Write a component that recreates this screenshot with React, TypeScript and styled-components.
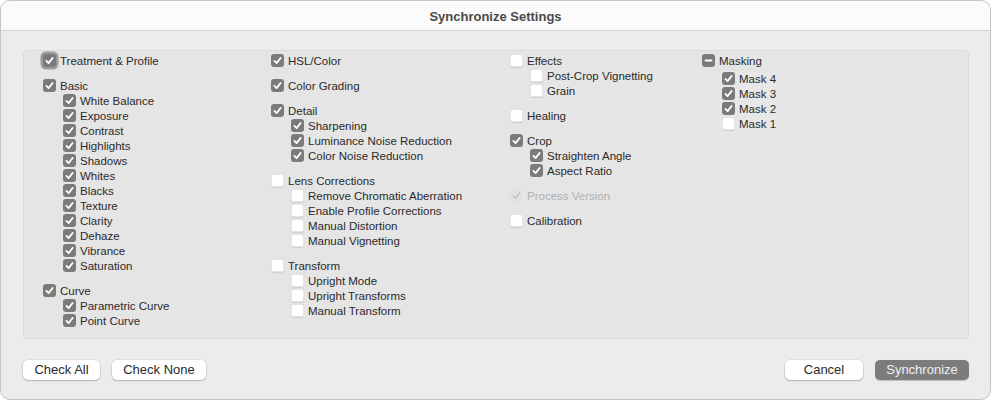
import React from "react";
import styled, { createGlobalStyle, css } from "styled-components";

const Global = createGlobalStyle`
  html, body { margin: 0; padding: 0; background: #ffffff; }
  body { font-family: "Liberation Sans", Arial, sans-serif; -webkit-font-smoothing: antialiased; }
  * { box-sizing: border-box; }
`;

const Window = styled.div`
  width: 991px;
  height: 400px;
  border: 1px solid #c4c4c4;
  border-radius: 10px;
  overflow: hidden;
  background: #ececec;
  display: flex;
  flex-direction: column;
`;

const TitleBar = styled.div`
  height: 30px;
  flex: none;
  background: #fbfbfb;
  border-bottom: 1px solid #d4d4d4;
  display: flex;
  align-items: center;
  justify-content: center;
  font-weight: bold;
  font-size: 13px;
  color: #4a4a4a;
  padding-top: 1px;
`;

const Body = styled.div`
  padding: 19px 21px 0 22px;
  display: flex;
  flex-direction: column;
`;

const Panel = styled.div`
  height: 289px;
  background: #e5e5e5;
  border: 1px solid #dadada;
  border-radius: 4px;
  display: grid;
  grid-template-columns: 228px 239px 192px 1fr;
  padding: 2px 0 0 19px;
`;

const Column = styled.div`
  display: flex;
  flex-direction: column;
  gap: 10px;
`;

const Group = styled.div`
  display: flex;
  flex-direction: column;
`;

const SubList = styled.div`
  display: flex;
  flex-direction: column;
  padding-left: 20px;
`;

const MaskBox = styled.div`
  margin-top: 2px;
  margin-left: 1px;
  width: 242px;
  height: 258px;
  background: #e7e7e7;
  border: 1px solid #e3e3e3;
  display: flex;
  flex-direction: column;
  padding: 0 0 0 18px;
`;

const Row = styled.div<{ $disabled?: boolean }>`
  height: 15px;
  display: flex;
  align-items: center;
  gap: 4px;
  font-size: 11.5px;
  color: ${(p) => (p.$disabled ? "#b0b0b0" : "#2a2a2a")};
  white-space: nowrap;
`;

type BoxState = "on" | "off" | "mixed" | "disabled";

const Box = styled.span<{ $state: BoxState; $focus?: boolean }>`
  width: 13px;
  height: 13px;
  flex: none;
  border-radius: 3px;
  display: flex;
  align-items: center;
  justify-content: center;
  ${(p) =>
    p.$state === "on" || p.$state === "mixed"
      ? css`
          background: #7b7b7b;
        `
      : p.$state === "disabled"
      ? css`
          background: #e2e2e2;
        `
      : css`
          background: #ffffff;
          box-shadow: inset 0 0 0 0.5px #d0d0d0, 0 0.5px 1px rgba(0, 0, 0, 0.1);
        `}
  ${(p) =>
    p.$focus &&
    css`
      box-shadow: 0 0 0 2.5px #9b9b9b;
    `}
`;

const Label = styled.span``;

function Check({
  label,
  state = "on",
  focus,
}: {
  label: string;
  state?: BoxState;
  focus?: boolean;
}) {
  return (
    <Row $disabled={state === "disabled"}>
      <Box $state={state} $focus={focus}>
        {(state === "on" || state === "disabled") && (
          <svg width="13" height="13" viewBox="0 0 13 13">
            <path
              d="M3.4 6.9 L5.6 9.1 L9.7 3.9"
              fill="none"
              stroke={state === "disabled" ? "#c4c4c4" : "#ffffff"}
              strokeWidth="1.7"
              strokeLinecap="round"
              strokeLinejoin="round"
            />
          </svg>
        )}
        {state === "mixed" && (
          <svg width="13" height="13" viewBox="0 0 13 13">
            <path d="M3.5 6.5 H9.5" stroke="#ffffff" strokeWidth="1.8" strokeLinecap="round" />
          </svg>
        )}
      </Box>
      <Label>{label}</Label>
    </Row>
  );
}

function Section({
  label,
  state = "on",
  focus,
  items = [],
  sub = "on",
}: {
  label: string;
  state?: BoxState;
  focus?: boolean;
  items?: string[];
  sub?: BoxState;
}) {
  return (
    <Group>
      <Check label={label} state={state} focus={focus} />
      {items.length > 0 && (
        <SubList>
          {items.map((i) => (
            <Check key={i} label={i} state={sub} />
          ))}
        </SubList>
      )}
    </Group>
  );
}

const Footer = styled.div`
  display: flex;
  align-items: center;
  padding: 21px 21px 0 22px;
`;

const Spacer = styled.div`
  flex: 1;
`;

const Button = styled.button<{ $primary?: boolean; $w: number }>`
  height: 20px;
  width: ${(p) => p.$w}px;
  border: none;
  border-radius: 5px;
  font-family: "Liberation Sans", Arial, sans-serif;
  font-size: 13px;
  padding: 0 0 1px;
  color: ${(p) => (p.$primary ? "#f0f0f0" : "#2a2a2a")};
  background: ${(p) => (p.$primary ? "#7c7c7c" : "#ffffff")};
  box-shadow: ${(p) =>
    p.$primary
      ? "0 0.5px 1px rgba(0,0,0,0.2)"
      : "0 0 0 0.5px rgba(0,0,0,0.12), 0 1px 1.5px rgba(0,0,0,0.2)"};
  margin-right: ${(p) => (p.$primary ? 0 : 12)}px;
`;

export default function App() {
  return (
    <>
      <Global />
      <Window>
        <TitleBar>Synchronize Settings</TitleBar>
        <Body>
          <Panel>
            <Column>
              <Section label="Treatment & Profile" focus />
              <Section
                label="Basic"
                items={[
                  "White Balance",
                  "Exposure",
                  "Contrast",
                  "Highlights",
                  "Shadows",
                  "Whites",
                  "Blacks",
                  "Texture",
                  "Clarity",
                  "Dehaze",
                  "Vibrance",
                  "Saturation",
                ]}
              />
              <Section label="Curve" items={["Parametric Curve", "Point Curve"]} />
            </Column>
            <Column>
              <Section label="HSL/Color" />
              <Section label="Color Grading" />
              <Section
                label="Detail"
                items={["Sharpening", "Luminance Noise Reduction", "Color Noise Reduction"]}
              />
              <Section
                label="Lens Corrections"
                state="off"
                sub="off"
                items={[
                  "Remove Chromatic Aberration",
                  "Enable Profile Corrections",
                  "Manual Distortion",
                  "Manual Vignetting",
                ]}
              />
              <Section
                label="Transform"
                state="off"
                sub="off"
                items={["Upright Mode", "Upright Transforms", "Manual Transform"]}
              />
            </Column>
            <Column>
              <Section
                label="Effects"
                state="off"
                sub="off"
                items={["Post-Crop Vignetting", "Grain"]}
              />
              <Section label="Healing" state="off" />
              <Section label="Crop" items={["Straighten Angle", "Aspect Ratio"]} />
              <Section label="Process Version" state="disabled" />
              <Section label="Calibration" state="off" />
            </Column>
            <Column>
              <Group>
                <Check label="Masking" state="mixed" />
                <MaskBox>
                  <Check label="Mask 4" />
                  <Check label="Mask 3" />
                  <Check label="Mask 2" />
                  <Check label="Mask 1" state="off" />
                </MaskBox>
              </Group>
            </Column>
          </Panel>
        </Body>
        <Footer>
          <Button $w={77}>Check All</Button>
          <Button $w={94}>Check None</Button>
          <Spacer />
          <Button $w={78}>Cancel</Button>
          <Button $w={94} $primary>
            Synchronize
          </Button>
        </Footer>
      </Window>
    </>
  );
}
